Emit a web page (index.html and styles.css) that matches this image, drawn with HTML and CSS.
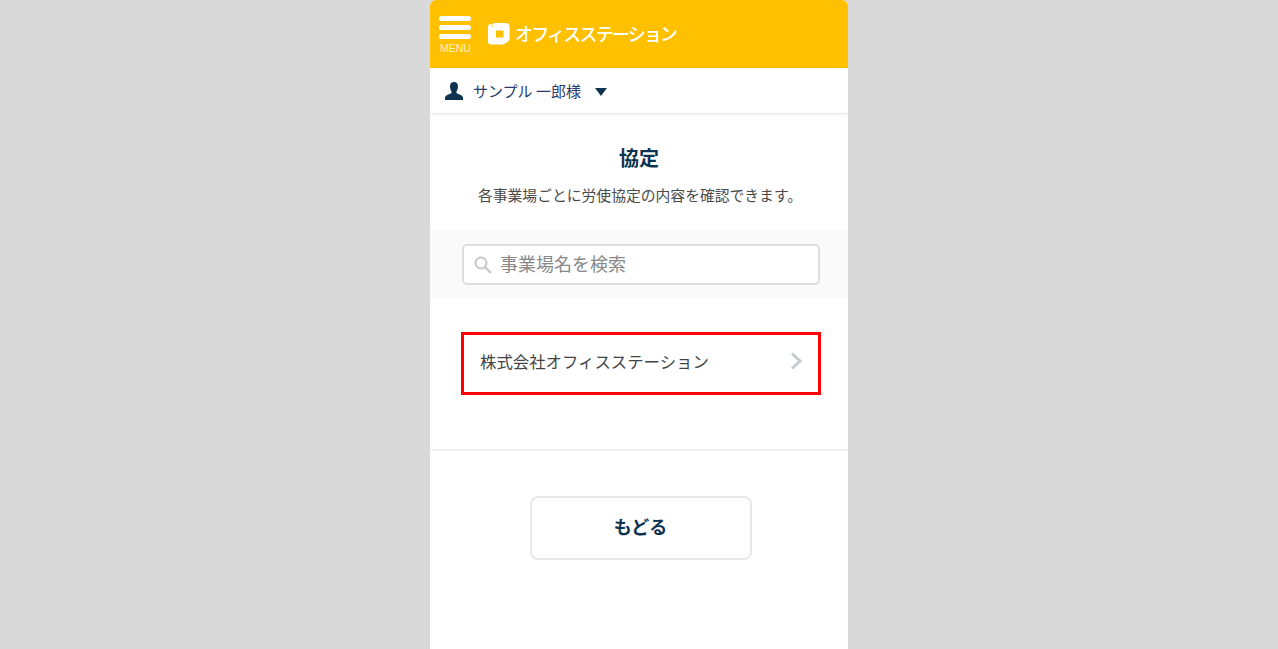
FILE: index.html
```html
<!DOCTYPE html>
<html lang="ja">
<head>
  <meta charset="UTF-8">
  <title>協定 | オフィスステーション</title>
  <link rel="stylesheet" href="styles.css">
</head>
<body>
  <div class="phone">
    <header class="topbar">
      <div class="menu">
        <span class="menu-line"></span>
        <span class="menu-line"></span>
        <span class="menu-line"></span>
        <span class="menu-label">MENU</span>
      </div>
      <svg class="logo-mark" viewBox="0 0 22 22" width="22" height="22">
        <path fill="#fff" fill-rule="evenodd" d="M6 0H18Q21.500 0 21.500 3.500V16Q21.500 18 19.500 19L15 21.500H3Q0 21.500 0 18.500V4Q0 1 3 1L4.500 1ZM8 7.500V14.500H15.500V7.500Z"/>
        <path d="M3.500 0.500L5 4" stroke="#ffc000" stroke-width="0.800" fill="none"/>
      </svg>
      <span class="logo-text">オフィスステーション</span>
    </header>

    <div class="userbar">
      <svg class="user-icon" viewBox="0 0 18 18" width="18" height="18">
        <path fill="#0d3350" d="M9 0C11.800 0 13 2 13 4.500C13 7 12 8.500 11.500 9.500V11C12.500 12 18 13 18 16V18H0V16C0 13 5.500 12 6.500 11V9.500C6 8.500 5 7 5 4.500C5 2 6.200 0 9 0Z"/>
      </svg>
      <span class="user-name">サンプル 一郎様</span>
      <span class="caret"></span>
    </div>

    <main>
      <h1 class="title">協定</h1>
      <p class="lead">各事業場ごとに労使協定の内容を確認できます。</p>

      <div class="search-band">
        <div class="search-box">
          <svg class="search-icon" viewBox="0 0 18 18" width="18" height="18">
            <circle cx="7" cy="7" r="5.500" fill="none" stroke="#c8c8c8" stroke-width="2"/>
            <path d="M11 11L17 17" stroke="#c8c8c8" stroke-width="2.400"/>
          </svg>
          <span class="placeholder">事業場名を検索</span>
        </div>
      </div>

      <div class="list">
        <a class="list-item">
          <span class="item-name">株式会社オフィスステーション</span>
          <svg class="chevron" viewBox="0 0 12 18" width="12" height="18">
            <path d="M2 1.500L10 9L2 16.500" fill="none" stroke="#c6cacd" stroke-width="3"/>
          </svg>
        </a>
      </div>

      <div class="actions">
        <button class="back-btn">もどる</button>
      </div>
    </main>
  </div>
</body>
</html>
```

FILE: styles.css
```css
html, body {
  height: 100%;
}
body {
  margin: 0;
  background-color: #d9d9d9;
  font-family: "Noto Sans CJK JP", "Noto Sans", sans-serif;
  overflow: hidden;
}
.phone {
  width: 418px;
  height: 649px;
  margin-left: 430px;
  background-color: #ffffff;
  border-radius: 6px 6px 0 0;
  overflow: hidden;
}
.topbar {
  display: flex;
  align-items: center;
  height: 68px;
  padding-left: 9px;
  box-sizing: border-box;
  background-color: #ffc000;
}
.menu {
  display: flex;
  flex-direction: column;
  align-items: center;
  width: 32px;
  margin-top: 2px;
}
.menu-line {
  width: 32px;
  height: 5px;
  margin-bottom: 4px;
  border-radius: 3px;
  background-color: #ffffff;
}
.menu-label {
  padding-left: 1px;
  font-family: "Liberation Sans", sans-serif;
  font-size: 10.500px;
  line-height: 11px;
  color: #fff2cc;
}
.logo-mark {
  margin-left: 17px;
  margin-bottom: 1px;
}
.logo-text {
  margin-left: 5px;
  margin-bottom: 3px;
  font-size: 18px;
  font-weight: 500;
  letter-spacing: -1.800px;
  color: #ffffff;
}
.userbar {
  display: flex;
  align-items: center;
  height: 45px;
  padding-left: 15px;
  box-shadow: 0 1px 3px rgba(0, 0, 0, 0.12);
}
.user-name {
  margin-left: 10px;
  font-size: 15px;
  color: #2b3a6b;
}
.caret {
  margin-left: 14px;
  margin-top: 2px;
  border-top: 8px solid #0d3350;
  border-left: 6.500px solid transparent;
  border-right: 6.500px solid transparent;
}
.title {
  margin: 30px 0 0;
  font-size: 20px;
  line-height: 30px;
  font-weight: 700;
  text-align: center;
  color: #0d3350;
}
.lead {
  margin: 11px 0 0;
  padding-left: 2px;
  font-size: 14.800px;
  line-height: 22px;
  text-align: center;
  color: #4a4a4a;
}
.search-band {
  margin-top: 24px;
  padding: 14px 28px 13px 32px;
  background-color: #fafafa;
}
.search-box {
  display: flex;
  align-items: center;
  height: 41px;
  padding-left: 10px;
  box-sizing: border-box;
  background-color: #ffffff;
  border: 2px solid #dedede;
  border-radius: 5px;
}
.placeholder {
  margin-left: 8px;
  margin-bottom: 4px;
  font-size: 18px;
  color: #888888;
}
.list {
  padding: 34px 27px 54px 31px;
  border-bottom: 2px solid #f0f0f0;
}
.list-item {
  display: flex;
  align-items: center;
  justify-content: space-between;
  height: 63px;
  padding: 0 16px 0 16px;
  box-sizing: border-box;
  border: 3px solid #ff0000;
  font-size: 16.400px;
  color: #444444;
}
.item-name {
  margin-bottom: 6px;
}
.chevron {
  margin-bottom: 6px;
}
.actions {
  display: flex;
  justify-content: center;
  padding-top: 45px;
  padding-left: 3px;
}
.back-btn {
  width: 222px;
  height: 64px;
  padding-bottom: 6px;
  background-color: #ffffff;
  border: 2px solid #e8e8e8;
  border-radius: 8px;
  font-family: inherit;
  font-size: 18px;
  font-weight: 700;
  color: #0d3350;
}
```
